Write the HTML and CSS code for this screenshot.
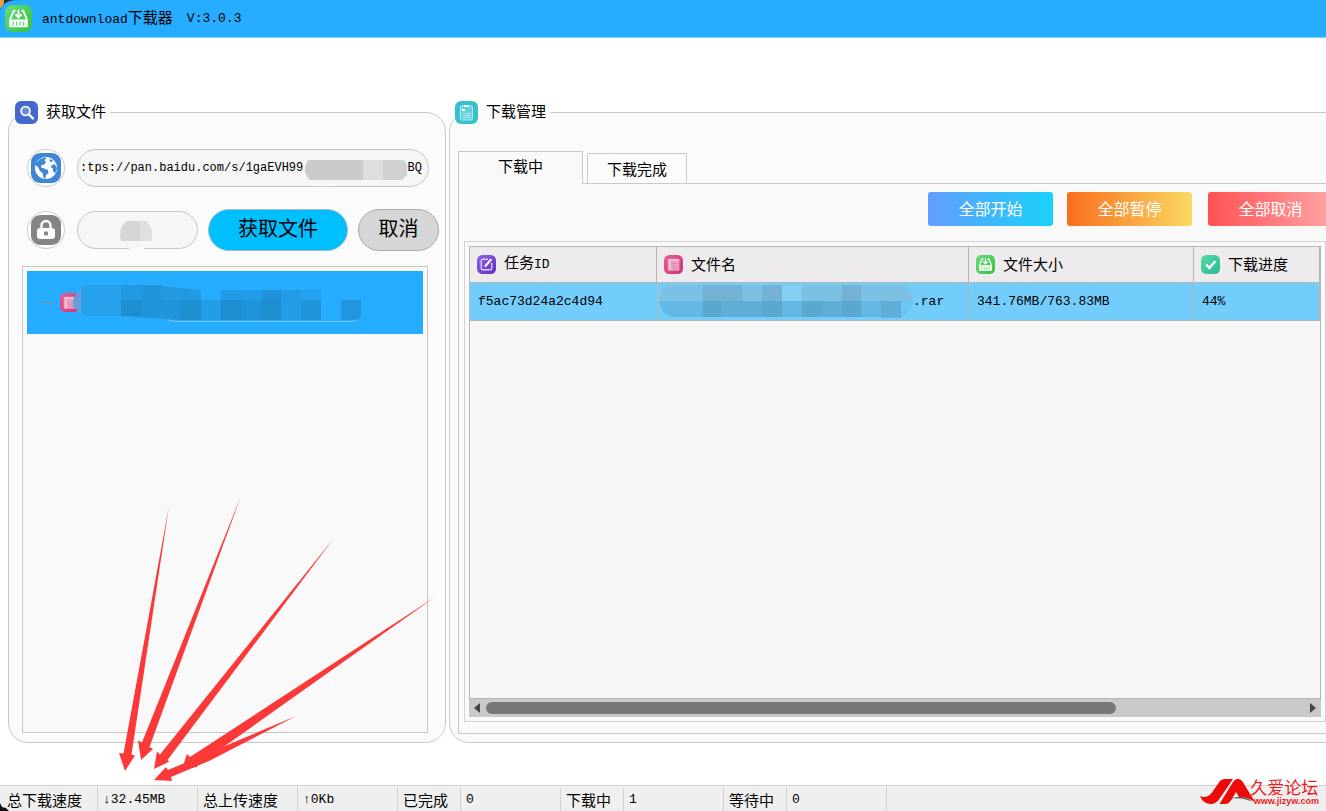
FILE: index.html
```
<!DOCTYPE html>
<html lang="zh-CN">
<head>
<meta charset="utf-8">
<title>antdownload下载器</title>
<link rel="stylesheet" href="styles.css">
</head>
<body>
<svg class="defs" width="0" height="0" aria-hidden="true">
  <defs>
    <linearGradient id="gGreen" x1="0" y1="0" x2="1" y2="1"><stop offset="0" stop-color="#68dc7c"/><stop offset="1" stop-color="#32c143"/></linearGradient>
    <linearGradient id="gMint" x1="0" y1="0" x2="1" y2="1"><stop offset="0" stop-color="#55dba9"/><stop offset="1" stop-color="#2db893"/></linearGradient>
    <linearGradient id="gPurple" x1="0" y1="0" x2="1" y2="1"><stop offset="0" stop-color="#9260ee"/><stop offset="1" stop-color="#5a32bd"/></linearGradient>
    <linearGradient id="gPink" x1="0" y1="0" x2="1" y2="1"><stop offset="0" stop-color="#ec5c96"/><stop offset="1" stop-color="#cf3379"/></linearGradient>
    <symbol id="download" viewBox="0 0 26 26">
      <rect width="26" height="26" rx="7" fill="url(#gGreen)"/>
      <path d="M10 5.500H8.500L4.800 14M16 5.500h1.500l3.700 8.500" stroke="#fff" stroke-width="1.800" fill="none"/>
      <path d="M13 4.500V11M10 9l3 3 3-3" stroke="#fff" stroke-width="1.800" fill="none"/>
      <rect x="4" y="14" width="18" height="7.500" rx="1" fill="#fff"/>
      <path d="M8 16v4M11.300 16v4M14.700 16v4M18 16v4" stroke="#62d873" stroke-width="1.200"/>
    </symbol>
    <symbol id="list" viewBox="0 0 18 18">
      <rect width="18" height="18" rx="5" fill="url(#gPink)"/>
      <rect x="3.500" y="3.500" width="11" height="11.500" rx="1.500" fill="#e9a2bf"/>
      <path d="M3.500 4.800h11M5.500 6v8.500" stroke="#f8d8e5" stroke-width="1"/>
      <path d="M8 8h5M8 10.500h5M8 13h5" stroke="#dc83aa" stroke-width=".8"/>
    </symbol>
  </defs>
</svg>

<header class="titlebar">
  <svg class="app-icon" aria-hidden="true"><use href="#download"/></svg>
  <h1 class="title"><span class="mono">antdownload</span>下载器</h1>
  <span class="mono version">V:3.0.3</span>
</header>

<main class="main">
  <fieldset class="panel fetch">
    <legend class="legend">
      <svg viewBox="0 0 23 23" class="legend-icon" aria-hidden="true"><rect width="23" height="23" rx="6" fill="#4568cf"/><circle cx="10.500" cy="10" r="4.400" fill="#6d8bdd" stroke="#fff" stroke-width="1.800"/><path d="m14 13.500 4 4" stroke="#fff" stroke-width="2.400" stroke-linecap="round"/></svg>
      <span>获取文件</span>
    </legend>
    <div class="row">
      <label class="round" for="url">
        <svg viewBox="0 0 30 30" aria-label="链接"><rect width="30" height="30" rx="9" fill="#3f86d6"/><circle cx="15" cy="15" r="11" fill="#fff"/><path d="M5.500 9.500 9 6l5-1.500 2 1-3 1.500 2 2-1.500 2.500-3 .5-.5 2.500 3 1 4 1.500.5 3-2.500 2-.5 3.500-2-1-1-4.500-2.500-2-2-4-3-2z" fill="#3f86d6"/><path d="m19 6 3 1.500-1 1.500-2.500-.5zM20.500 12.500l3-1.500 2.500 4-1.500 5-2.500-1.500v-3l-2-1z" fill="#3f86d6"/></svg>
      </label>
      <div class="pill url-pill">
        <input id="url" class="field mono" type="text" value=":tps://pan.baidu.com/s/1gaEVH99">
        <svg class="url-mask" viewBox="0 0 104 28" aria-hidden="true"><path d="M4 1h94q6 2 5 8l-5 12H6Q-3 12 4 1z" fill="#cbcbcb"/><path d="M59 1h20v20H59z" fill="#dedede"/><path d="M79 1h18q6 2 6 7v8l-5 5H79z" fill="#d1d1d1"/><path d="M10 26h17" stroke="#fafafa" stroke-width="2"/></svg>
        <span class="mono">BQ</span>
      </div>
    </div>
    <div class="row actions">
      <label class="round" for="code">
        <svg viewBox="0 0 30 30" aria-label="提取码"><rect width="30" height="30" rx="9" fill="#858585"/><path d="M10.500 14V10.500a4.500 4.500 0 0 1 9 0V14" stroke="#fff" stroke-width="2.400" fill="none"/><rect x="6" y="13" width="18" height="11" rx="3" fill="#fff"/><rect x="13" y="16.500" width="4" height="4" rx="1" fill="#858585"/></svg>
      </label>
      <div class="pill code-pill">
        <input id="code" class="field mono" type="text">
        <svg class="code-mask" viewBox="0 0 32 30" aria-hidden="true"><path d="M6 1h20l5 7 1 8-1 5H1l-1-5 1-8z" fill="#d6d6d6"/><path d="M20 1h6l5 7 1 8-1 5H20z" fill="#dfdfdf"/><path d="M9 28h15" stroke="#fafafa" stroke-width="2"/></svg>
      </div>
      <button class="btn get" type="button">获取文件</button>
      <button class="btn cancel" type="button">取消</button>
    </div>
    <div class="tree">
      <div class="tree-item">
        <svg class="tree-art" viewBox="0 0 397 63" aria-hidden="true">
          <path d="M13 31.500h14" stroke="#7091a0"/>
          <svg x="33" y="22" width="19" height="19"><use href="#list"/></svg>
          <path d="m46 28 8-11v26l-8-7z" fill="#6a9bdd"/>
          <path d="M54 16l6-2h40v31H60l-6-2z" fill="#26a1ec"/>
          <path d="M94 14h30l50 5v30h-30l-50-4z" fill="#2399e2"/>
          <path d="M94 29h20v16H94zM154 29h20v20h-20zM194 29h20v20h-20zM234 29h20v20h-20z" fill="#1d8ed0"/>
          <path d="M114 14h20v31h-20zM134 29h20v19l-20-3zM214 29h20v20h-20zM274 29h20v20h-20z" fill="#2094da"/>
          <path d="M174 29h20v20h-20zM254 29h20v20h-20zM194 19h40v10h-40zM254 19h20v10h-20z" fill="#229ce7"/>
          <path d="M234 19h20v10h-20z" fill="#1f92d9"/>
          <path d="M274 19h20v10h-20z" fill="#25a2f2"/>
          <path d="M314 29h20v16l-3 4h-17z" fill="#2197df"/>
          <path d="M141 49l8 1.500h176l5-1.500" stroke="#72c8fb" fill="none"/>
        </svg>
      </div>
    </div>
  </fieldset>

  <fieldset class="panel manage">
    <legend class="legend">
      <svg viewBox="0 0 23 23" class="legend-icon" aria-hidden="true"><rect width="23" height="23" rx="6" fill="#35c1cd"/><rect x="5.500" y="5" width="12" height="14" rx="1.500" fill="#63d0d9" stroke="#b9ecf0"/><path d="M9 5h5M7 9h3" stroke="#fff" stroke-width="2"/><path d="M8 12.500h8M8 14.500h8M8 16.500h8" stroke="#c5f0f3" stroke-width=".8"/></svg>
      <span>下载管理</span>
    </legend>
    <div class="tabs" role="tablist">
      <button class="tab active" type="button" role="tab" aria-selected="true">下载中</button>
      <button class="tab" type="button" role="tab" aria-selected="false">下载完成</button>
    </div>
    <div class="pane">
      <div class="toolbar">
        <button class="tool start" type="button">全部开始</button>
        <button class="tool pause" type="button">全部暂停</button>
        <button class="tool stop" type="button">全部取消</button>
      </div>
      <div class="frame">
        <div class="grid">
          <table class="table">
            <colgroup><col class="c-id"><col class="c-name"><col class="c-size"><col></colgroup>
            <thead>
              <tr>
                <th scope="col"><div class="head"><svg viewBox="0 0 18 18" aria-hidden="true"><rect width="18" height="18" rx="5" fill="url(#gPurple)"/><path d="M10.500 4H5.500Q4 4 4 5.500v7Q4 14 5.500 14h7q1.500 0 1.500-1.500V7.500" fill="none" stroke="#d9cbf8" stroke-width="1.300"/><path d="M13.500 4 7.500 11" stroke="#fff" stroke-width="2"/></svg><span>任务<span class="mono id">ID</span></span></div></th>
                <th scope="col"><div class="head"><svg aria-hidden="true"><use href="#list"/></svg><span>文件名</span></div></th>
                <th scope="col"><div class="head"><svg aria-hidden="true"><use href="#download"/></svg><span>文件大小</span></div></th>
                <th scope="col"><div class="head"><svg viewBox="0 0 18 18" aria-hidden="true"><rect width="18" height="18" rx="5" fill="url(#gMint)"/><path d="m5 9 3 3.300L13.500 6" fill="none" stroke="#fff" stroke-width="2.200"/></svg><span>下载进度</span></div></th>
              </tr>
            </thead>
            <tbody>
              <tr>
                <td class="mono">f5ac73d24a2c4d94</td>
                <td class="mono name"><div class="file">
                  <svg class="name-mask" viewBox="0 0 256 33" aria-hidden="true">
                    <path d="M8 0h240q8 6 8 16H0Q0 6 8 0z" fill="#7dc0e5"/><path d="M0 16h256q-1 10-12 16H12Q1 28 0 16z" fill="#64b8e4"/>
                    <path d="M44 0h40v16H44zM104 0h20v16h-20zM184 0h20v16h-20z" fill="#74b2d3"/><path d="M124 0h20v16h-20z" fill="#84cff4"/><path d="M24 0h20v16H24zM204 0h20v16h-20z" fill="#7bc1e7"/>
                    <path d="M44 16h20v16H44zM104 16h20v16h-20zM144 16h20v16h-20zM184 16h20v16h-20z" fill="#5aa8d0"/><path d="M64 16h40v16H64zM164 16h20v16h-20zM224 16h20v17h-20z" fill="#60aed8"/><path d="M244 16h12q-1 10-12 15z" fill="#6ac6f4"/>
                  </svg>.rar</div></td>
                <td class="mono">341.76MB/763.83MB</td>
                <td class="mono">44%</td>
              </tr>
            </tbody>
          </table>
        </div>
        <div class="scroll" aria-hidden="true">
          <svg viewBox="0 0 8 12"><path d="M7 1v10L1 6z" fill="#444"/></svg>
          <div class="track"><div class="thumb"></div></div>
          <svg viewBox="0 0 8 12"><path d="M1 1v10l6-5z" fill="#444"/></svg>
        </div>
      </div>
    </div>
  </fieldset>
</main>

<footer class="status">
  <span class="cell first">总下载速度</span>
  <span class="cell wide mono">↓32.45MB</span>
  <span class="cell wide">总上传速度</span>
  <span class="cell wide mono">↑0Kb</span>
  <span class="cell small">已完成</span>
  <span class="cell wide mono">0</span>
  <span class="cell small">下载中</span>
  <span class="cell wide mono">1</span>
  <span class="cell small">等待中</span>
  <span class="cell wide mono">0</span>
</footer>

<svg class="arrows" viewBox="0 0 450 320" aria-hidden="true">
  <g fill="#fc3939">
    <path d="M169 26 131.500 274.500l3.500 1-10 15.500-6-18 4.500.5z"/>
    <path d="M241 16 149.500 267l3.500 2-12 11-3-19.500 4 2z"/>
    <path d="M334 58 167.500 280l2 1.500L154 289l3-17.500 3 3z"/>
    <path d="M435 117 198 285l-1 2-15 2 5-15 3 3z"/>
    <path d="M296 236 209 281 171 297l1 4-18-1 12-13 2 3z"/>
  </g>
</svg>
<svg class="corner top" viewBox="0 0 16 10" aria-hidden="true"><path d="M0 0h16Q4 0 0 10z" fill="#252831"/><path d="M0 0h4v4L0 9z" fill="#dda43e"/></svg>
<svg class="corner bottom" viewBox="0 0 9 8" aria-hidden="true"><path d="M0 0l2 4 4 1 3 3H0z" fill="#111"/></svg>

<div class="brand">
  <svg viewBox="0 0 56 28" aria-hidden="true"><path d="M0 18q4 1.500 7 .5 3-1 5-4L20 3q2-2 5-2h8L20 20q-4 6-9 6Q3 26 0 18z" fill="#ed0a0a"/><path d="M19.500 26 33 4q2-3 4-3h1.500q2.500 0 4 2.500L55 24q-8-5-16-5l-3-5-4 7q-3 5-7 5z" fill="#ed0a0a"/><path d="M32 20.500q11-4 21 3.500-10-5-21-3.500z" fill="#555"/></svg>
  <div class="brand-text"><span class="brand-name">久爱论坛</span><span class="brand-url">www.jizyw.com</span></div>
</div>
</body>
</html>
```
FILE: styles.css
```
* { box-sizing: border-box; }
body {
  margin: 0;
  position: relative;
  min-height: 100vh;
  display: flex;
  flex-direction: column;
  overflow: hidden;
  background: #fff;
  color: #000;
  font: 15px/20px "Noto Sans CJK SC", sans-serif;
}
button, input { font: inherit; color: inherit; }
.mono { font-family: "Liberation Mono", "Noto Sans CJK SC", monospace; font-size: 13px; }
.defs { position: absolute; }

.titlebar {
  display: flex;
  align-items: center;
  height: 38px;
  padding-left: 5px;
  background: #27adff;
  border-bottom: 1px solid #7fcaf5;
}
.app-icon { width: 27px; height: 27px; margin-right: 10px; }
.title { margin: 0; font-size: 15px; font-weight: 400; }
.version { margin-left: 14px; }

.main {
  flex: 1;
  display: flex;
  gap: 3px;
  padding: 62px 0 42px 8px;
  margin-right: -20px;
}
.panel {
  display: flex;
  flex-direction: column;
  min-width: 0;
  margin: 0;
  border: 1px solid #c9c9c9;
  border-radius: 20px;
  background: #fbfbfb;
}
.fetch { width: 438px; padding: 25px 6px 9px; }
.manage { flex: 1; padding: 28px 0 8px 8px; }
.legend {
  display: flex;
  align-items: center;
  gap: 8px;
  height: 24px;
  padding: 0 4px 0 0;
  background: linear-gradient(#fff 50%, #fbfbfb 50%);
}
.legend span, .head > span { padding-bottom: 2px; }
.manage .legend { margin-left: -3px; }
.legend-icon { width: 23px; height: 23px; }

.row { display: flex; align-items: center; gap: 12px; margin-left: 12px; }
.actions { margin-top: 22px; height: 42px; }
.round {
  display: grid;
  place-items: center;
  width: 38px;
  height: 38px;
  border: 1px solid #ccc;
  border-radius: 50%;
  background: #fff;
}
.round svg { width: 30px; height: 30px; }
.pill {
  position: relative;
  display: flex;
  align-items: center;
  height: 38px;
  border: 1px solid #c6c6c6;
  border-radius: 19px;
  background: #f6f6f6;
}
.url-pill { width: 352px; padding: 0 6px 0 2px; }
.url-pill .mono { font-size: 12px; }
.code-pill { width: 121px; }
.field { flex: 1; min-width: 0; width: 100%; border: 0; padding: 0; background: none; outline: 0; }
.url-mask { position: absolute; right: 20px; top: 9px; width: 104px; height: 28px; }
.code-mask { position: absolute; left: 42px; top: 8px; width: 32px; height: 30px; }
.btn { height: 42px; padding: 0 0 4px; border: 1px solid #aaa; border-radius: 21px; font-size: 20px; line-height: 24px; }
.get { width: 140px; margin-left: -2px; background: #00bfff; border-color: #a5bcc5; }
.cancel { width: 81px; margin-left: -2px; background: #d6d6d6; }
.tree { flex: 1; margin: 15px 11px 0 7px; padding: 4px; border: 1px solid #c6c6c6; background: #f9f9f9; }
.tree-item { background: #27adff; overflow: hidden; }
.tree-art { display: block; width: 397px; height: 63px; }

.tabs { display: flex; align-items: flex-end; gap: 4px; height: 31px; }
.tab {
  width: 100px;
  height: 30px;
  padding: 0;
  border: 1px solid #c9c9c9;
  border-bottom: 0;
  background: #fbfbfb;
}
.tab.active { position: relative; width: 125px; height: 33px; margin-bottom: -1px; padding-bottom: 4px; background: #f9f9f9; }
.pane {
  flex: 1;
  display: flex;
  flex-direction: column;
  padding: 8px 18px 11px 5px;
  border: 1px solid #c9c9c9;
  background: #f9f9f9;
}
.toolbar { display: flex; justify-content: flex-end; gap: 14px; margin-right: -7px; }
.tool { width: 125px; height: 34px; border: 0; border-radius: 3px; padding: 0 0 3px; color: #fff; font-size: 16px; }
.start { background: linear-gradient(90deg, #629dff, #1bd2fa); }
.pause { background: linear-gradient(90deg, #f96d1d, #fada63); }
.stop { background: linear-gradient(90deg, #ff5153, #ffa5a5); margin-left: 2px; }
.frame {
  flex: 1;
  display: flex;
  flex-direction: column;
  margin-top: 15px;
  padding: 4px;
  border: 1px solid #d2d2d2;
}
.grid { flex: 1; border: 1px solid #b5b5b5; background: #f7f7f7; }
.table { width: 100%; table-layout: fixed; border-collapse: separate; border-spacing: 0; }
.c-id { width: 187px; }
.c-name { width: 312px; }
.c-size { width: 225px; }
.table th, .table td { padding: 0 8px; border-right: 1px solid #b5b5b5; border-bottom: 1px solid #b5b5b5; text-align: left; font-weight: 400; }
.table th { height: 36px; padding-left: 7px; background: #edebeb; }
.table td { height: 38px; background: #72cdfb; }
.head { display: flex; align-items: center; gap: 8px; }
.head svg { width: 19px; height: 19px; }
.table .name { padding-left: 2px; }
.file { display: flex; align-items: center; height: 36px; }
.name-mask { width: 254px; height: 33px; }
.scroll {
  display: flex;
  align-items: center;
  gap: 5px;
  height: 18px;
  padding: 0 4px;
  background: #c9c9c9;
}
.scroll svg { width: 8px; height: 12px; }
.track { flex: 1; }
.thumb { width: 77%; height: 12px; border-radius: 6px; background: #777; }

.status { display: flex; height: 26px; padding-top: 2px; border-top: 1px solid #d2d2d2; background: #efefef; }
.cell { padding: 2px 0 0 5px; border-right: 1px solid #d2d2d2; white-space: nowrap; }
.first { width: 98px; padding-left: 7px; }
.wide { width: 100px; }
.small { width: 63px; }

.arrows { position: absolute; left: 0; top: 480px; width: 450px; height: 320px; pointer-events: none; }
.corner { position: absolute; left: 0; }
.corner.top { top: 0; width: 16px; height: 10px; }
.corner.bottom { bottom: 0; width: 9px; height: 8px; }
.brand { position: absolute; right: 7px; bottom: 5px; display: flex; color: #ed1c1c; }
.brand > svg { width: 56px; height: 28px; margin-right: -6px; }
.brand-text { display: flex; flex-direction: column; align-items: center; }
.brand-name { font-size: 17px; line-height: 18px; font-weight: 400; }
.brand-url { padding-left: 4px; font: bold 9px/10px "Liberation Sans", sans-serif; }
```
